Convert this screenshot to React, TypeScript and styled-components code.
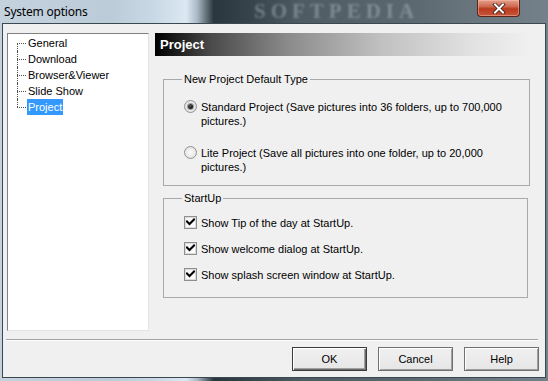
import React from 'react';
import styled, { createGlobalStyle } from 'styled-components';

const Global = createGlobalStyle`
  html, body { margin: 0; padding: 0; }
  body {
    width: 548px; height: 381px; overflow: hidden;
    font-family: "Liberation Sans", Arial, sans-serif;
    font-size: 11px; color: #000;
  }
  #root { width: 548px; height: 381px; }
`;

const Window = styled.div`
  width: 548px; height: 381px; box-sizing: border-box;
  display: flex; flex-direction: column;
  padding: 0 2px 3px 2px;
  background:
    linear-gradient(90deg, #c4d2de 0%, #bccbd8 20%, #c9d8e5 28%, #dce8f2 34%, #a8b8c5 36%, #2a363d 39%, #35424a 45%, #4e5b63 55%, #5b6870 75%, #6c7880 88%, #75818a 100%);
`;

const TitleBar = styled.div`
  height: 23px; flex: none; display: flex; align-items: flex-start;
  position: relative;
`;

const Title = styled.div`
  font-family: "Noto Sans", "Open Sans", sans-serif;
  font-size: 12px; line-height: 23px; color: #000;
  padding-left: 2px;
  letter-spacing: -0.2px;
`;

const Watermark = styled.div`
  position: absolute; left: 252px; top: 0;
  font-family: "Liberation Serif", serif; font-weight: bold;
  font-size: 21px; line-height: 22px; letter-spacing: 5px;
  color: rgba(190, 202, 210, 0.4);
  filter: blur(1.2px);
  pointer-events: none;
`;

const CloseButton = styled.div`
  margin-left: auto; margin-right: 26px;
  width: 43px; height: 17px; box-sizing: border-box;
  border: 1px solid #5a2418; border-top: none;
  border-radius: 0 0 4px 4px;
  background: linear-gradient(180deg, #e5a08d 0%, #cf6a50 40%, #b93b1f 55%, #c8553a 100%);
  box-shadow: inset 0 0 0 1px rgba(255, 200, 180, 0.45);
  display: flex; align-items: center; justify-content: center;
`;

const Client = styled.div`
  flex: 1; display: flex; flex-direction: column;
  background: #f0f0f0;
  border: 1px solid #3b4850;
`;

const Body = styled.div`
  display: flex; padding: 9px 0 0 4px;
`;

const Tree = styled.div`
  width: 142px; height: 298px; box-sizing: border-box; flex: none;
  background: #fff;
  border: 1px solid; border-color: #828282 #e3e3e3 #e3e3e3 #828282;
  padding-top: 1px;
`;

const TreeItem = styled.div<{ $first?: boolean; $last?: boolean }>`
  position: relative; height: 16px; padding-left: 19px;
  display: flex; align-items: center;
  &::before {
    content: ""; position: absolute; left: 9px; top: 8px; width: 9px;
    border-top: 1px dotted #505050;
  }
  &::after {
    content: ""; position: absolute; left: 9px;
    top: ${(p) => (p.$first ? '8px' : '0')};
    height: ${(p) => (p.$first || p.$last ? '8px' : '16px')};
    border-left: 1px dotted #505050;
  }
`;

const TreeLabel = styled.span<{ $selected?: boolean }>`
  line-height: 16px; padding: 0 1px 0 1px;
  background: ${(p) => (p.$selected ? '#3399ff' : 'transparent')};
  color: ${(p) => (p.$selected ? '#fff' : '#000')};
`;

const Panel = styled.div`
  width: 375px; margin-left: 6px; display: flex; flex-direction: column;
`;

const Header = styled.div`
  height: 23px; box-sizing: border-box; padding-left: 5px;
  background: linear-gradient(90deg, #000 0%, #4a4a4a 15%, #8a8a8a 35%, #c0c0c0 60%, #e2e2e2 85%, #f0f0f0 100%);
  color: #fff; font-weight: bold; font-size: 13px; line-height: 23px;
`;

const Group = styled.fieldset<{ $top: number; $right: number; $pt: number; $pb: number; $gap: number }>`
  margin: ${(p) => p.$top}px ${(p) => p.$right}px 0 8px;
  padding: ${(p) => p.$pt}px 0 ${(p) => p.$pb}px 20px;
  border: 1px solid #a9a9a9; border-radius: 0;
  display: flex; flex-direction: column; gap: ${(p) => p.$gap}px;
  min-width: 0;
`;

const Legend = styled.legend`
  margin-left: -2px; padding: 0 2px; line-height: 13px;
`;

const OptionRow = styled.label`
  display: flex; align-items: flex-start; gap: 4px;
  line-height: 14px;
`;

const OptionText = styled.span`
  width: 318px;
`;

const RadioDot = styled.span<{ $checked?: boolean }>`
  width: 13px; height: 13px; box-sizing: border-box; flex: none;
  border-radius: 50%;
  border: 1px solid #929292;
  background: radial-gradient(circle at 50% 50%, #fafafa 0%, #eaeaea 55%, #d2d2d2 100%);
  display: flex; align-items: center; justify-content: center;
  &::after {
    content: "";
    width: 5px; height: 5px; border-radius: 50%;
    background: ${(p) => (p.$checked ? 'radial-gradient(circle at 40% 35%, #5a5a5a 0%, #111 70%)' : 'transparent')};
    box-shadow: ${(p) => (p.$checked ? '0 0 0 1px #9a9a9a' : 'none')};
  }
`;

const CheckBox = styled.span`
  width: 13px; height: 13px; box-sizing: border-box; flex: none;
  border: 1px solid #8e8f8f;
  background: linear-gradient(135deg, #f4f4f4 0%, #ffffff 100%);
  box-shadow: inset 0 0 0 1px #dcdcdc;
  display: flex; align-items: center; justify-content: center;
`;

const Separator = styled.div`
  margin: 8px 7px 0 3px; height: 2px;
  border-top: 1px solid #a0a0a0; border-bottom: 1px solid #fff;
  box-sizing: border-box;
`;

const ButtonRow = styled.div`
  display: flex; justify-content: flex-end; gap: 11px;
  margin: 6px 6px 0 0;
`;

const Button = styled.button<{ $default?: boolean }>`
  width: 75px; height: 24px; box-sizing: border-box;
  font-family: inherit; font-size: 11px; color: #000;
  border: 1px solid ${(p) => (p.$default ? '#3c3c3c' : '#707070')};
  border-radius: 0;
  background: linear-gradient(180deg, #f0f0f0 0%, #e6e6e6 100%);
  box-shadow: ${(p) =>
    p.$default
      ? 'inset 1px 1px 0 #fff, inset -1px -1px 0 #696969, inset -2px -2px 0 #a0a0a0'
      : 'inset 1px 1px 0 #fff, inset -1px -1px 0 #a0a0a0'};
  padding: 0;
`;

const CheckIcon = () => (
  <svg width="9" height="9" viewBox="0 0 9 9">
    <path d="M1 3.5 L3.5 6 L8 1.5" fill="none" stroke="#000" strokeWidth="2" strokeLinecap="square" />
  </svg>
);

const CloseIcon = () => (
  <svg width="14" height="11" viewBox="0 0 14 11">
    <path d="M3 1.5 L11 9.5 M11 1.5 L3 9.5" stroke="#3a1a12" strokeWidth="3.6" strokeLinecap="square" />
    <path d="M3 1.5 L11 9.5 M11 1.5 L3 9.5" stroke="#fff" strokeWidth="2" strokeLinecap="square" />
  </svg>
);

const treeItems = ['General', 'Download', 'Browser&Viewer', 'Slide Show', 'Project'];

export default function App() {
  return (
    <>
      <Global />
      <Window>
        <TitleBar>
          <Title>System options</Title>
          <Watermark>SOFTPEDIA</Watermark>
          <CloseButton>
            <CloseIcon />
          </CloseButton>
        </TitleBar>
        <Client>
          <Body>
            <Tree>
              {treeItems.map((t, i) => (
                <TreeItem key={t} $first={i === 0} $last={i === treeItems.length - 1}>
                  <TreeLabel $selected={t === 'Project'}>{t}</TreeLabel>
                </TreeItem>
              ))}
            </Tree>
            <Panel>
              <Header>Project</Header>
              <Group $top={17} $right={0} $pt={14} $pb={11} $gap={18}>
                <Legend>New Project Default Type</Legend>
                <OptionRow>
                  <RadioDot $checked />
                  <OptionText>Standard Project (Save pictures into 36 folders, up to 700,000 pictures.)</OptionText>
                </OptionRow>
                <OptionRow>
                  <RadioDot />
                  <OptionText>Lite Project (Save all pictures into one folder, up to 20,000 pictures.)</OptionText>
                </OptionRow>
              </Group>
              <Group $top={6} $right={2} $pt={11} $pb={15} $gap={12}>
                <Legend>StartUp</Legend>
                <OptionRow>
                  <CheckBox><CheckIcon /></CheckBox>
                  <span>Show Tip of the day at StartUp.</span>
                </OptionRow>
                <OptionRow>
                  <CheckBox><CheckIcon /></CheckBox>
                  <span>Show welcome dialog at StartUp.</span>
                </OptionRow>
                <OptionRow>
                  <CheckBox><CheckIcon /></CheckBox>
                  <span>Show splash screen window at StartUp.</span>
                </OptionRow>
              </Group>
            </Panel>
          </Body>
          <Separator />
          <ButtonRow>
            <Button $default>OK</Button>
            <Button>Cancel</Button>
            <Button>Help</Button>
          </ButtonRow>
        </Client>
      </Window>
    </>
  );
}
